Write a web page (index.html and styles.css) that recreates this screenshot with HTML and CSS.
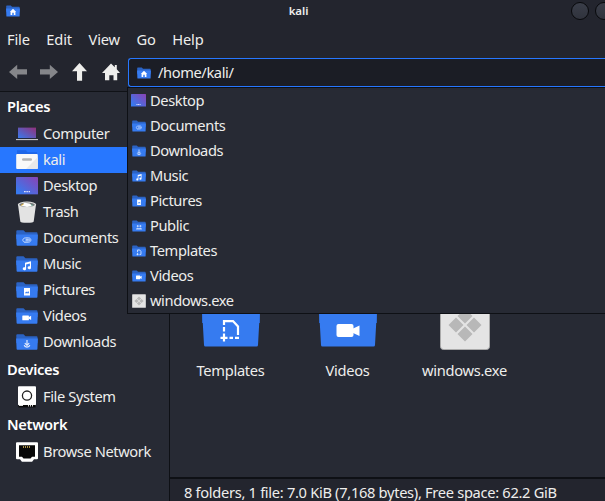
FILE: index.html
```html
<!DOCTYPE html>
<html lang="en">
<head>
<meta charset="utf-8">
<title>kali</title>
<link rel="stylesheet" href="styles.css">
</head>
<body>
<svg class="defs" aria-hidden="true">
  <defs>
    <linearGradient id="screen" x1="0" y1="1" x2="1" y2="0"><stop offset="0.1" stop-color="#367bf0"/><stop offset="1" stop-color="#8a42b4"/></linearGradient>
    <linearGradient id="laptop" x1="0" y1="1" x2="1" y2="0"><stop offset="0" stop-color="#367bf0"/><stop offset="1" stop-color="#92307a"/></linearGradient>
  </defs>
  <symbol id="folder" viewBox="0 0 22 22" preserveAspectRatio="none">
    <path fill="#2b63c4" d="M.3 4.3q0-1 1-1h6.2l2 2h11q1 0 1 1V12H.3z"/>
    <path fill="#367bf0" d="M.1 7.6h21.8L21.4 18q0 .7-.8.7H1.4q-.8 0-.8-.7z"/>
  </symbol>
  <symbol id="g-home" viewBox="0 0 22 22" preserveAspectRatio="none"><path fill="#fff" d="M11 8l5 4.3h-1.2v4.2h-2.6v-3h-2.4v3H7.2v-4.2H6z"/></symbol>
  <symbol id="g-doc" viewBox="0 0 22 22" preserveAspectRatio="none"><path fill="none" stroke="#c9dcff" stroke-width="1" d="M8.500 15.200h3.800c3.400 0 3.400-4.300.2-4.300H9.600c-3.600 0-3.600 4.300-.4 4.300M9.500 13.800h3.200c1.300 0 1.300-1.500 0-1.500H9.600"/></symbol>
  <symbol id="g-music" viewBox="0 0 22 22" preserveAspectRatio="none"><path fill="#fff" d="M9 9.700l6-1.400v6.400a1.700 1.500 0 1 1-1.100-1.400v-2.700l-3.800.9v4.200a1.700 1.500 0 1 1-1.100-1.400z"/></symbol>
  <symbol id="g-pic" viewBox="0 0 22 22" preserveAspectRatio="none"><path fill="#fff" d="M8 9h6v7.500H8z"/><path fill="#367bf0" d="M8.900 14.200l1.300-1.600 1 .9 1-1.600 1.100 2.300z"/></symbol>
  <symbol id="g-video" viewBox="0 0 22 22" preserveAspectRatio="none"><rect x="6.300" y="10.400" width="6.600" height="4.900" rx=".6" fill="#fff"/><path fill="#fff" d="M12.600 12.200l2.500-1.400v4.200l-2.500-1.400z"/></symbol>
  <symbol id="g-down" viewBox="0 0 22 22" preserveAspectRatio="none"><path fill="none" stroke="#dce8ff" stroke-width="1.200" d="M11 9v5.200M8.800 12.200l2.200 2.200 2.200-2.200M8.200 14.200q.4 1.900 2.800 1.900t2.800-1.900"/></symbol>
  <symbol id="g-public" viewBox="0 0 22 22" preserveAspectRatio="none"><g fill="#bcd4ff"><circle cx="9" cy="11.200" r="1.500"/><circle cx="13.200" cy="11.200" r="1.500"/><path d="M6.300 15.900q0-2.600 2.600-2.600 1.200 0 2.100.8.900-.8 2.200-.8 2.500 0 2.500 2.600z"/></g></symbol>
  <symbol id="g-tmpl" viewBox="0 0 22 22" preserveAspectRatio="none"><path fill="none" stroke="#e2ecff" stroke-width="1.200" d="M8.700 12.600V9.600h3.400l2 2.100v4h-2.300M8.700 13.800v3M7.200 15.600h3.100"/></symbol>
  <symbol id="desktop" viewBox="0 0 22 18" preserveAspectRatio="none"><rect width="22" height="17.500" rx=".8" fill="url(#screen)"/><path fill="#dde3ff" d="M8 14h1.700v1.200H8zM10.400 14h1.500v1.200h-1.500zM12.600 14h1.400v1.200h-1.400z"/><path fill="#373b68" d="M.5 17h21v.8H.5z"/></symbol>
  <symbol id="exe" viewBox="0 0 50 50"><rect x=".5" y=".5" width="49" height="49" rx="3" fill="#e4e4e4" stroke="#aaa"/><g fill="#b8b8b8"><path d="M25 8.500l7.500 7.500-7.500 7.500-7.500-7.500zM16 17.500l7.500 7.500-7.500 7.500L8.500 25zM34 17.500l7.500 7.500-7.500 7.500-7.500-7.500zM25 26.500l7.500 7.500-7.500 7.500-7.500-7.500z"/></g></symbol>
</svg>

<div class="window">
  <header class="titlebar">
    <svg class="small"><use href="#folder"/><use href="#g-home"/></svg>
    <span class="title">kali</span>
    <div class="controls"><i></i><i></i></div>
  </header>
  <nav class="menubar"><span>File</span><span>Edit</span><span>View</span><span>Go</span><span>Help</span></nav>
  <div class="toolbar">
    <svg class="tool dim" viewBox="0 0 20 20"><path d="M1 10l8.200-7.200v4.400H19v5.400H9.200V17z"/></svg>
    <svg class="tool dim" viewBox="0 0 20 20"><path d="M19 10l-8.200-7.200v4.400H1v5.400h9.800V17z"/></svg>
    <svg class="tool" viewBox="0 0 20 20"><path d="M9.500 1l7.500 8.300h-4.900v9.500H7V9.300H2z"/></svg>
    <svg class="tool" viewBox="0 0 20 20"><path d="M10 1.600l3.800 3.700V3h2v4.200L19 11h-2.800v7.200h-3.700v-5H8.300v5H4V11H1z"/></svg>
    <div class="location">
      <div class="entry"><svg class="small"><use href="#folder"/><use href="#g-home"/></svg><span>/home/kali/</span></div>
      <ul class="popup">
        <li><svg class="small-desk"><use href="#desktop"/></svg><span>Desktop</span></li>
        <li><svg class="small"><use href="#folder"/><use href="#g-doc"/></svg><span>Documents</span></li>
        <li><svg class="small"><use href="#folder"/><use href="#g-down"/></svg><span>Downloads</span></li>
        <li><svg class="small"><use href="#folder"/><use href="#g-music"/></svg><span>Music</span></li>
        <li><svg class="small"><use href="#folder"/><use href="#g-pic"/></svg><span>Pictures</span></li>
        <li><svg class="small"><use href="#folder"/><use href="#g-public"/></svg><span>Public</span></li>
        <li><svg class="small"><use href="#folder"/><use href="#g-tmpl"/></svg><span>Templates</span></li>
        <li><svg class="small"><use href="#folder"/><use href="#g-video"/></svg><span>Videos</span></li>
        <li><svg class="small-exe"><use href="#exe"/></svg><span>windows.exe</span></li>
      </ul>
    </div>
  </div>
  <div class="body">
    <aside class="sidebar">
      <h2>Places</h2>
      <div class="place"><svg viewBox="0 0 22 22"><rect x="2" y="4.600" width="18" height="11" fill="url(#laptop)"/><path fill="#1c1e27" d="M2 15.200h18v1H2z"/><path fill="#eee" d="M0 16.200h22v.9H0z"/></svg><span>Computer</span></div>
      <div class="place selected"><svg viewBox="0 0 22 22"><path fill="#1e66e8" d="M1 1.300h9l1.500 2H21v2H1z"/><path fill="#f9f9f9" d="M.2 6q0-1 1-1h19.600q1 0 1 1v13.200q0 .8-1 .8H1.200q-1 0-1-.8z"/><path fill="#e9e9e9" d="M21.800 8v11.200q0 .8-1 .8H10z"/><rect x="6" y="9.300" width="10" height="2.400" rx="1.200" fill="#b4b4b4"/></svg><span>kali</span></div>
      <div class="place"><svg viewBox="0 0 22 22"><use href="#desktop" y="2" width="22" height="18"/></svg><span>Desktop</span></div>
      <div class="place"><svg viewBox="0 0 22 22"><path fill="#e3e3e3" d="M2 3.500L4.300 20.500q0 1.300 6.700 1.300t6.700-1.300L20 3.500z"/><ellipse cx="11" cy="3.500" rx="9.200" ry="3" fill="#dedede"/><ellipse cx="11" cy="3.700" rx="7.800" ry="2.200" fill="#777a7c"/><path fill="#fff" d="M4.500 4.800l4-3 5 .6 3.500 2.600-6 1z"/><path fill="#d9ad3c" d="M5 4l2-1.400 1 .5-2.500 1.800z"/><path fill="#3f9c7b" d="M15 3.300l1.800.6-1 1z"/></svg><span>Trash</span></div>
      <div class="place"><svg><use href="#folder"/><use href="#g-doc"/></svg><span>Documents</span></div>
      <div class="place"><svg><use href="#folder"/><use href="#g-music"/></svg><span>Music</span></div>
      <div class="place"><svg><use href="#folder"/><use href="#g-pic"/></svg><span>Pictures</span></div>
      <div class="place"><svg><use href="#folder"/><use href="#g-video"/></svg><span>Videos</span></div>
      <div class="place"><svg><use href="#folder"/><use href="#g-down"/></svg><span>Downloads</span></div>
      <h2>Devices</h2>
      <div class="place"><svg viewBox="0 0 22 22"><rect x="2" y=".3" width="18" height="19" rx="1" fill="#fff"/><circle cx="11" cy="9.600" r="4.600" fill="none" stroke="#222" stroke-width="1.300"/><path fill="#080808" d="M2.500 19h17v2.400h-17z"/><path fill="#ddd" d="M3 19h4v1H3zM12 19h1v1.500h-1zM14 19h1v1.500h-1zM16 19h1v1.500h-1z"/></svg><span>File System</span></div>
      <h2>Network</h2>
      <div class="place"><svg viewBox="0 0 22 22"><path fill="#fff" d="M1 1.300h20q1 0 1 1v15q0 1-1 1h-3l-1.500 2q-.4.500-1 .5h-9q-.6 0-1-.5l-1.500-2H1q-1 0-1-1v-15q0-1 1-1z"/><path fill="#080808" d="M3 4.300h16v11.400h-3l-1.500 1.800h-7L6 15.700H3z"/><path stroke="#ab9146" d="M7.500 5v2M9.500 5v2M11.500 5v2M13.500 5v2"/></svg><span>Browse Network</span></div>
    </aside>
    <main class="content">
      <div class="files">
        <div class="file"><svg viewBox="0 0 64 64"><path fill="#2b63c4" d="M3 10h23l5 6h30v20H3z"/><path fill="#367bf0" d="M3 22h58l-2 36q0 1.500-1.500 1.500h-51Q5 59.500 5 58z"/><path fill="none" stroke="#fff" stroke-width="2.200" d="M25 38v-3.900h9l5 5.400v8.500M25 40v4.500M25 46.500v8M21.500 50.800h7M30.500 50.800h3.500M36 50.800h4"/></svg><span>Templates</span></div>
        <div class="file"><svg viewBox="0 0 64 64"><path fill="#2b63c4" d="M3 10h23l5 6h30v20H3z"/><path fill="#367bf0" d="M3 22h58l-2 36q0 1.500-1.500 1.500h-51Q5 59.500 5 58z"/><rect x="20.500" y="37" width="17" height="13" rx="2" fill="#fff"/><path fill="#fff" d="M36 42l7.500-3.500v10.500l-7.500-3.500z"/></svg><span>Videos</span></div>
        <div class="file"><svg viewBox="0 0 64 64"><use href="#exe" x="7" y="13" width="50" height="50"/></svg><span>windows.exe</span></div>
      </div>
      <footer class="status">8 folders, 1 file: 7.0 KiB (7,168 bytes), Free space: 62.2 GiB</footer>
    </main>
  </div>
</div>
</body>
</html>
```
FILE: styles.css
```css
* { box-sizing: border-box; }
body { margin: 0; background: #272a34; color: #eeeeec; font: 14.667px/20px "Noto Sans", sans-serif; letter-spacing: -0.4px; overflow: hidden; }
svg { display: block; flex: none; }
.defs { position: absolute; width: 0; height: 0; }
.window { width: 605px; height: 501px; display: flex; flex-direction: column; overflow: hidden; }
.titlebar { height: 23px; background: #23252e; display: grid; grid-template-columns: 1fr auto 1fr; padding: 0 0 0 6px; }
.titlebar .small { margin-top: 3px; }
.title { font-size: 11.500px; font-weight: 600; line-height: 21px; padding-right: 14px; letter-spacing: -0.1px; }
.controls { display: flex; gap: 6px; justify-content: flex-end; padding-top: 2px; margin-right: -8px; }
.controls i { width: 18px; height: 18px; flex: none; border: 1px solid #08090c; border-radius: 50%; background: linear-gradient(#3a3e49, #30333d); }
.menubar { height: 29px; background: #23252e; display: flex; gap: 16.500px; padding: 6px 7px 0; letter-spacing: -0.15px; }
.toolbar { height: 40px; background: #23252e; border-bottom: 1px solid #101217; display: flex; padding: 6px 0 0 8px; }
.tool { width: 20px; height: 20px; margin: 4px 11px 0 0; fill: #eeeeec; }
.tool.dim { fill: #85868a; }
.tool:nth-child(4) { margin-right: 7px; }
.location { position: relative; flex: 1; }
.entry { height: 29px; background: #1b1d25; border: 1px solid #2777ff; border-right: 0; border-radius: 3px 0 0 3px; display: flex; align-items: center; gap: 7px; padding-left: 8px; }
.entry span { padding-bottom: 1px; }
.small { width: 14px; height: 16px; }
.popup { position: absolute; z-index: 2; top: 29px; left: -1px; width: 478px; margin: 0; padding: 0; list-style: none; background: #272a34; border: 1px solid #0e1015; border-right: 0; }
.popup li { height: 25px; display: flex; align-items: center; gap: 4px; padding-left: 4px; }
.popup li span, .place span { padding-bottom: 2px; }
.small-desk { width: 15px; height: 13px; margin-left: -1px; }
.small-exe { width: 14px; height: 14px; }
.body { flex: 1; display: flex; min-height: 0; }
.sidebar { width: 170px; border-right: 1px solid #0e1015; }
.sidebar h2 { margin: 0; height: 29px; padding-left: 7px; font-size: 14.667px; line-height: 29px; font-weight: 600; color: #fff; letter-spacing: -0.3px; }
.place { height: 26px; display: flex; align-items: center; gap: 5px; padding-left: 16px; white-space: nowrap; }
.place svg { width: 22px; height: 22px; }
.selected { background: #2777ff; }
.content { flex: 1; display: flex; flex-direction: column; min-width: 0; }
.files { flex: 1; display: flex; align-items: flex-start; padding: 195px 0 0 2px; letter-spacing: -0.3px; }
.file { width: 117px; display: flex; flex-direction: column; align-items: center; gap: 9px; }
.file svg { width: 64px; height: 64px; }
.status { height: 24px; flex: none; background: #23252e; border-top: 2px solid #0e1015; padding: 4px 0 0 14px; line-height: 18px; letter-spacing: -0.31px; white-space: nowrap; }
```
